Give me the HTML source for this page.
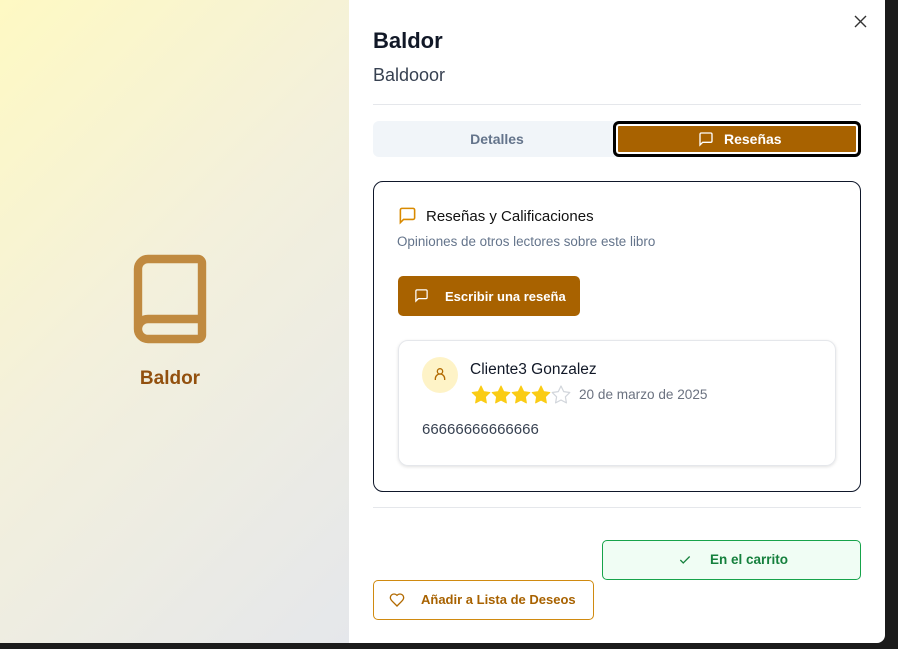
<!DOCTYPE html>
<html><head><meta charset="utf-8"><style>
*{box-sizing:border-box;margin:0;padding:0}
body{width:898px;height:649px;overflow:hidden;background:#1b1b1b;font-family:"Liberation Sans",sans-serif;position:relative}
.modal{position:absolute;left:0;top:0;width:885px;height:643px;background:#fff;border-radius:0 0 8px 0;overflow:hidden}
.left{position:absolute;left:0;top:0;width:349px;height:643px;background:linear-gradient(135deg,#fef9c3 0%,#f3f0dc 45%,#e5e7eb 100%)}
.abs{position:absolute}
.t{white-space:nowrap}
</style></head><body>
<div class="modal">
<div class="left">
<svg class="abs" style="left:122px;top:251px" width="96" height="96" viewBox="0 0 24 24" fill="none" stroke="#c08a40" stroke-width="2.1" stroke-linecap="round" stroke-linejoin="round"><path d="M4 19.5v-15A2.5 2.5 0 0 1 6.5 2H19a1 1 0 0 1 1 1v18a1 1 0 0 1-1 1H6.5a1 1 0 0 1 0-5H20"/></svg>
<div class="abs t" style="left:0;width:340px;text-align:center;top:368px;font-size:19px;font-weight:bold;color:#92500e">Baldor</div>
</div>
<svg class="abs" style="left:854px;top:15px" width="13" height="13" viewBox="0 0 13 13" stroke="#333" stroke-width="1.4"><path d="M1 1L12 12M12 1L1 12"/></svg>
<div class="abs t" style="left:373px;top:28px;font-size:22px;font-weight:bold;color:#111827">Baldor</div>
<div class="abs t" style="left:373px;top:65px;font-size:18px;color:#374151">Baldooor</div>
<div class="abs" style="left:373px;top:104px;width:488px;height:1px;background:#e5e7eb"></div>
<div class="abs" style="left:373px;top:121px;width:488px;height:36px;background:#f1f5f9;border-radius:6px"></div>
<div class="abs t" style="left:373px;top:131px;width:248px;text-align:center;font-size:14px;font-weight:bold;color:#64748b">Detalles</div>
<div class="abs" style="left:613px;top:121px;width:248px;height:36px;background:#a86200;border:3px solid #000;border-radius:6px;box-shadow:inset 0 0 0 2px #fff"></div>
<svg class="abs" style="left:698px;top:131px" width="16" height="16" viewBox="0 0 24 24" fill="none" stroke="#fff" stroke-width="2"><path d="M21 15a2 2 0 0 1-2 2H7l-4 4V5a2 2 0 0 1 2-2h14a2 2 0 0 1 2 2z"/></svg>
<div class="abs t" style="left:724px;top:131px;font-size:14px;font-weight:bold;color:#fff">Reseñas</div>
<div class="abs" style="left:373px;top:181px;width:488px;height:311px;border:1px solid #0f172a;border-radius:10px"></div>
<svg class="abs" style="left:398px;top:206px" width="19" height="19" viewBox="0 0 24 24" fill="none" stroke="#d98a00" stroke-width="2"><path d="M21 15a2 2 0 0 1-2 2H7l-4 4V5a2 2 0 0 1 2-2h14a2 2 0 0 1 2 2z"/></svg>
<div class="abs t" style="left:426px;top:208px;font-size:15px;color:#111">Reseñas y Calificaciones</div>
<div class="abs t" style="left:397px;top:234px;font-size:13.4px;color:#64748b">Opiniones de otros lectores sobre este libro</div>
<div class="abs" style="left:398px;top:276px;width:182px;height:40px;background:#a86200;border-radius:5px"></div>
<svg class="abs" style="left:414px;top:288px" width="15" height="15" viewBox="0 0 24 24" fill="none" stroke="#fff" stroke-width="2"><path d="M21 15a2 2 0 0 1-2 2H7l-4 4V5a2 2 0 0 1 2-2h14a2 2 0 0 1 2 2z"/></svg>
<div class="abs t" style="left:445px;top:289px;font-size:13px;font-weight:bold;color:#fff">Escribir una reseña</div>
<div class="abs" style="left:398px;top:340px;width:438px;height:126px;border:1px solid #e5e7eb;border-radius:10px;box-shadow:0 1px 3px rgba(0,0,0,.12)"></div>
<div class="abs" style="left:422px;top:357px;width:36px;height:36px;border-radius:50%;background:#fef3c7"></div>
<svg class="abs" style="left:432px;top:366px" width="16" height="16" viewBox="0 0 24 24" fill="none" stroke="#b26a00" stroke-width="2"><circle cx="12" cy="8" r="4"/><path d="M5 21v-2a7 7 0 0 1 14 0v2"/></svg>
<div class="abs t" style="left:470px;top:361px;font-size:15.5px;color:#111827">Cliente3 Gonzalez</div>
<svg class="abs" style="left:471px;top:385px" width="100" height="20" viewBox="0 0 100 20">
<defs><path id="s" d="M10 1l2.7 5.6 6.1.9-4.4 4.3 1 6.1L10 15l-5.4 2.9 1-6.1L1.2 7.5l6.1-.9z"/></defs>
<use href="#s" fill="#facc15" stroke="#facc15" stroke-width="1" stroke-linejoin="round"/>
<use href="#s" x="20" fill="#facc15" stroke="#facc15" stroke-width="1" stroke-linejoin="round"/>
<use href="#s" x="40" fill="#facc15" stroke="#facc15" stroke-width="1" stroke-linejoin="round"/>
<use href="#s" x="60" fill="#facc15" stroke="#facc15" stroke-width="1" stroke-linejoin="round"/>
<use href="#s" x="80" fill="none" stroke="#d1d5db" stroke-width="1.2" stroke-linejoin="round"/>
</svg>
<div class="abs t" style="left:579px;top:387px;font-size:13.6px;color:#6b7280">20 de marzo de 2025</div>
<div class="abs t" style="left:422px;top:421px;font-size:15px;color:#374151">66666666666666</div>
<div class="abs" style="left:373px;top:507px;width:488px;height:1px;background:#e5e7eb"></div>
<div class="abs" style="left:602px;top:540px;width:259px;height:40px;background:#f0fdf4;border:1px solid #16a34a;border-radius:5px"></div>
<svg class="abs" style="left:678px;top:553px" width="14" height="14" viewBox="0 0 24 24" fill="none" stroke="#15803d" stroke-width="2.2"><path d="M20 6L9 17l-5-5"/></svg>
<div class="abs t" style="left:710px;top:552px;font-size:13.5px;font-weight:bold;color:#15803d">En el carrito</div>
<div class="abs" style="left:373px;top:580px;width:221px;height:40px;background:#fff;border:1px solid #d08a10;border-radius:5px"></div>
<svg class="abs" style="left:389px;top:592px" width="16" height="16" viewBox="0 0 24 24" fill="none" stroke="#b26a00" stroke-width="2"><path d="M19 14c1.5-1.5 3-3.2 3-5.5A5.5 5.5 0 0 0 16.5 3c-1.8 0-3 .5-4.5 2-1.5-1.5-2.7-2-4.5-2A5.5 5.5 0 0 0 2 8.5c0 2.3 1.5 4 3 5.5l7 7z"/></svg>
<div class="abs t" style="left:421px;top:592px;font-size:13px;font-weight:bold;color:#a86200">Añadir a Lista de Deseos</div>
</div>
</body></html>
